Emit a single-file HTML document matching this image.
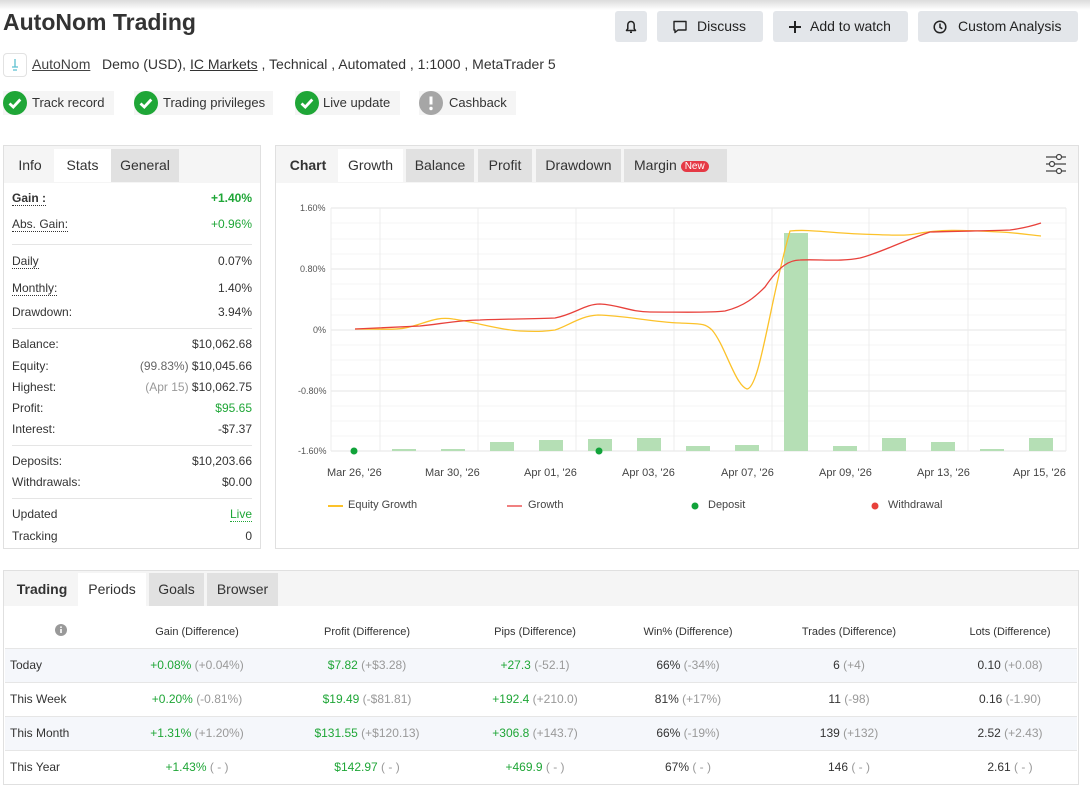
<!DOCTYPE html>
<html><head><meta charset="utf-8"><style>
*{box-sizing:border-box;margin:0;padding:0}
body{width:1090px;height:795px;background:#fff;font-family:"Liberation Sans",Arial,sans-serif;color:#333;position:relative;overflow:hidden}
.a{position:absolute;white-space:nowrap}
.topsh{position:absolute;left:0;top:0;width:1090px;height:10px;background:linear-gradient(#dcdcdc,#fff)}
.btn{position:absolute;top:11px;height:31px;background:#e3e6ea;border-radius:3px;font-size:14px;color:#222;line-height:31px}
.badge{position:absolute;top:91px;height:24px;background:#f5f5f5;font-size:13px;line-height:24px;color:#333}
.chk{position:absolute;left:0;top:0;width:24px;height:24px;border-radius:50%;background:#1fa637}
.panel{position:absolute;border:1px solid #e0e0e0;background:#fff}
.tabbar{position:absolute;left:0;top:0;right:0;height:37px;background:#f5f5f5}
.tab{position:absolute;top:4px;height:33px;line-height:33px;font-size:14px;color:#333;text-align:center}
.tw{background:#fff}.tg{background:#e1e1e1}
.row{position:absolute;left:8px;right:8px;font-size:12px;color:#333}
.row .v{position:absolute;right:0;top:0}
.dot{border-bottom:1px dotted #333}
.g{color:#1fa637}.gr{color:#999}
.sep{position:absolute;left:8px;right:8px;height:1px;background:#e5e5e5}
.tr{position:absolute;left:1px;right:1px;height:34px;border-top:1px solid #e6e6e6;font-size:12px;line-height:33px}
.tr span.c{position:absolute;top:0;transform:translateX(-50%);white-space:nowrap}
.lt{background:#f5f7fb}
.ax{font-size:9px;color:#555;position:absolute}
.xl{font-size:11px;color:#444;position:absolute}
</style></head><body>
<div class="topsh"></div>
<div class="a" style="left:3px;top:9px;font-size:23px;color:#333;font-weight:bold">AutoNom Trading</div>

<div class="btn" style="left:615px;width:32px"><svg width="32" height="31" viewBox="0 0 32 31"><path d="M11.5 19.5h9l-1.3-1.8v-4a3.2 3.2 0 0 0-6.4 0v4z M15 21.3h2" fill="none" stroke="#222" stroke-width="1.5" stroke-linejoin="round"/></svg></div>
<div class="btn" style="left:657px;width:106px"><svg class="a" style="left:15px;top:8px" width="16" height="16" viewBox="0 0 16 16"><path d="M2 2.5h12v8.5H6l-3 2.5V11H2z" fill="none" stroke="#222" stroke-width="1.4" stroke-linejoin="round"/></svg><span class="a" style="left:40px">Discuss</span></div>
<div class="btn" style="left:773px;width:135px"><svg class="a" style="left:15px;top:9px" width="14" height="14" viewBox="0 0 14 14"><path d="M7 1v12M1 7h12" stroke="#222" stroke-width="2"/></svg><span class="a" style="left:37px">Add to watch</span></div>
<div class="btn" style="left:918px;width:160px"><svg class="a" style="left:15px;top:9px" width="14" height="14" viewBox="0 0 14 14"><circle cx="7" cy="7" r="5.8" fill="none" stroke="#222" stroke-width="1.5"/><path d="M7 3.5V7.3l2.3 1.5" fill="none" stroke="#222" stroke-width="1.5"/></svg><span class="a" style="left:40px">Custom Analysis</span></div>

<div class="a" style="left:3px;top:53px;width:24px;height:24px;border:1px solid #e2e2e2;border-radius:4px;background:#fff"><svg width="22" height="22" viewBox="0 0 22 22"><path d="M11 5v8M8 13h6M9 16h4" stroke="#5bbfd0" stroke-width="1.3"/></svg></div>
<div class="a" style="left:32px;top:56px;font-size:14px;color:#333"><span style="text-decoration:underline;color:#444">AutoNom</span>&nbsp;&nbsp; Demo (USD), <span style="text-decoration:underline">IC Markets</span> , Technical , Automated , 1:1000 , MetaTrader 5</div>

<div class="badge" style="left:3px;width:111px"><div class="chk"><svg width="24" height="24"><path d="M6.5 12.5l3.8 3.5 7-7.5" fill="none" stroke="#fff" stroke-width="2.8"/></svg></div><span class="a" style="left:29px">Track record</span></div>
<div class="badge" style="left:134px;width:139px"><div class="chk"><svg width="24" height="24"><path d="M6.5 12.5l3.8 3.5 7-7.5" fill="none" stroke="#fff" stroke-width="2.8"/></svg></div><span class="a" style="left:29px">Trading privileges</span></div>
<div class="badge" style="left:295px;width:105px"><div class="chk"><svg width="24" height="24"><path d="M6.5 12.5l3.8 3.5 7-7.5" fill="none" stroke="#fff" stroke-width="2.8"/></svg></div><span class="a" style="left:28px">Live update</span></div>
<div class="badge" style="left:419px;width:97px"><div class="chk" style="background:#a6a6a6"><svg width="24" height="24"><path d="M12 5.5v8" stroke="#fff" stroke-width="3"/><circle cx="12" cy="17.5" r="1.7" fill="#fff"/></svg></div><span class="a" style="left:30px">Cashback</span></div>

<!-- left panel -->
<div class="panel" style="left:3px;top:145px;width:258px;height:404px">
 <div class="tabbar"></div>
 <div class="tab" style="left:2px;width:48px;top:3px">Info</div>
 <div class="tab tw" style="left:50px;width:57px;top:3px">Stats</div>
 <div class="tab tg" style="left:107px;width:68px;top:3px">General</div>
 <div class="row" style="top:45px"><b class="dot">Gain :</b><b class="v g">+1.40%</b></div>
 <div class="row" style="top:71px"><span class="dot">Abs. Gain:</span><span class="v g">+0.96%</span></div>
 <div class="sep" style="top:98px"></div>
 <div class="row" style="top:108px"><span class="dot">Daily</span><span class="v">0.07%</span></div>
 <div class="row" style="top:135px"><span class="dot">Monthly:</span><span class="v">1.40%</span></div>
 <div class="row" style="top:159px">Drawdown:<span class="v">3.94%</span></div>
 <div class="sep" style="top:182px"></div>
 <div class="row" style="top:191px">Balance:<span class="v">$10,062.68</span></div>
 <div class="row" style="top:213px">Equity:<span class="v"><span style="color:#666">(99.83%)</span> $10,045.66</span></div>
 <div class="row" style="top:234px">Highest:<span class="v"><span class="gr">(Apr 15)</span> $10,062.75</span></div>
 <div class="row" style="top:255px">Profit:<span class="v g">$95.65</span></div>
 <div class="row" style="top:276px">Interest:<span class="v">-$7.37</span></div>
 <div class="sep" style="top:299px"></div>
 <div class="row" style="top:308px">Deposits:<span class="v">$10,203.66</span></div>
 <div class="row" style="top:329px">Withdrawals:<span class="v">$0.00</span></div>
 <div class="sep" style="top:352px"></div>
 <div class="row" style="top:361px">Updated<span class="v g" style="border-bottom:1px dotted #1fa637">Live</span></div>
 <div class="row" style="top:383px">Tracking<span class="v">0</span></div>
</div>

<!-- chart panel -->
<div class="panel" style="left:275px;top:145px;width:804px;height:404px">
 <div class="tabbar"></div>
 <div class="tab" style="left:6px;width:52px;top:3px;font-weight:bold">Chart</div>
 <div class="tab tw" style="left:62px;width:65px;top:3px">Growth</div>
 <div class="tab tg" style="left:130px;width:68px;top:3px">Balance</div>
 <div class="tab tg" style="left:202px;width:54px;top:3px">Profit</div>
 <div class="tab tg" style="left:260px;width:85px;top:3px">Drawdown</div>
 <div class="tab tg" style="left:348px;width:103px;top:3px;text-align:left;padding-left:10px">Margin <span style="display:inline-block;background:#e53945;color:#fff;font-size:10px;line-height:11px;padding:0 4px;border-radius:6px;vertical-align:1px">New</span></div>
 <svg class="a" style="left:768px;top:7px" width="24" height="22" viewBox="0 0 24 22"><g stroke="#444" stroke-width="1.2" fill="#fff"><path d="M2 4h20M2 11h20M2 18h20"/><circle cx="15" cy="4" r="2.5"/><circle cx="8" cy="11" r="2.5"/><circle cx="15" cy="18" r="2.5"/></g></svg>
</div>
<svg class="a" style="left:0;top:0" width="1090" height="560">
 <g stroke="#ececec" stroke-width="1">
  <path d="M331 208H1066M331 269H1066M331 330H1066M331 391H1066M331 451H1066" stroke="#e4e4e4"/>
  <path d="M331 223H1066M331 239H1066M331 254H1066M331 284H1066M331 299H1066M331 315H1066M331 345H1066M331 360H1066M331 375H1066M331 406H1066M331 421H1066M331 436H1066" stroke="#f5f5f5"/>
  <path d="M331 208V451M380 208V451M478 208V451M576 208V451M674 208V451M772 208V451M869 208V451M968 208V451M1066 208V451"/>
 </g>
 <g fill="#b5dfb5">
  <rect x="392" y="449" width="24" height="2"/><rect x="441" y="449" width="24" height="2"/><rect x="490" y="442" width="24" height="9"/><rect x="539" y="440" width="24" height="11"/><rect x="588" y="439" width="24" height="12"/><rect x="637" y="438" width="24" height="13"/><rect x="686" y="446" width="24" height="5"/><rect x="735" y="445" width="24" height="6"/><rect x="784" y="233" width="24" height="218"/><rect x="833" y="446" width="24" height="5"/><rect x="882" y="438" width="24" height="13"/><rect x="931" y="442" width="24" height="9"/><rect x="980" y="449" width="24" height="2"/><rect x="1029" y="438" width="24" height="13"/>
 </g>
 <path d="M355 329C380 329 395 330 405 328C425 324 435 316 453 319C475 322 500 330 520 331C540 332 548 331 555 330C570 325 580 316 598 315C630 316 650 322 680 323C700 324 705 323 712 330C725 345 735 385 747 389C760 388 770 300 790 231C810 229 830 233 860 234C890 235 905 236 915 234C940 229 960 230 1000 232C1020 233 1030 235 1041 236" fill="none" stroke="#fcc22a" stroke-width="1.3"/>
 <path d="M355 329C380 328 400 327 420 326C440 324 460 320 480 320C500 319 530 319 555 318C575 314 585 304 600 304C620 305 630 312 650 312C680 312 710 313 725 311C745 306 755 297 765 287C780 265 790 260 800 260C820 259 840 262 860 258C880 253 900 242 930 232C960 231 990 231 1010 230C1025 228 1035 225 1041 223" fill="none" stroke="#e8413b" stroke-width="1.3"/>
 <circle cx="354" cy="451" r="3.5" fill="#11a33a"/><circle cx="599" cy="451" r="3.5" fill="#11a33a"/>
 <path d="M328 506h15" stroke="#fcc22a" stroke-width="2"/><path d="M507 506h15" stroke="#f08080" stroke-width="2"/>
 <circle cx="695" cy="506" r="3.5" fill="#11a33a"/><circle cx="875" cy="506" r="3.5" fill="#e8413b"/>
</svg>
<div class="ax" style="left:300px;top:203px">1.60%</div>
<div class="ax" style="left:300px;top:264px">0.80%</div>
<div class="ax" style="left:313px;top:325px">0%</div>
<div class="ax" style="left:298px;top:386px">-0.80%</div>
<div class="ax" style="left:298px;top:446px">-1.60%</div>
<div class="xl" style="left:327px;top:467px">Mar 26, '26</div>
<div class="xl" style="left:425px;top:467px">Mar 30, '26</div>
<div class="xl" style="left:524px;top:467px">Apr 01, '26</div>
<div class="xl" style="left:622px;top:467px">Apr 03, '26</div>
<div class="xl" style="left:721px;top:467px">Apr 07, '26</div>
<div class="xl" style="left:819px;top:467px">Apr 09, '26</div>
<div class="xl" style="left:917px;top:467px">Apr 13, '26</div>
<div class="xl" style="left:1013px;top:467px">Apr 15, '26</div>
<div class="xl" style="left:348px;top:499px">Equity Growth</div>
<div class="xl" style="left:528px;top:499px">Growth</div>
<div class="xl" style="left:708px;top:499px">Deposit</div>
<div class="xl" style="left:888px;top:499px">Withdrawal</div>

<!-- bottom -->
<div class="panel" style="left:3px;top:570px;width:1076px;height:215px">
 <div class="tabbar" style="height:35px"></div>
 <div class="tab" style="left:4px;width:68px;top:2px;font-weight:bold">Trading</div>
 <div class="tab tw" style="left:74px;width:68px;top:2px">Periods</div>
 <div class="tab tg" style="left:145px;width:55px;top:2px">Goals</div>
 <div class="tab tg" style="left:203px;width:71px;top:2px">Browser</div>
 <div class="tr" style="top:40px;height:37px;border-top:none;font-size:11px;line-height:42px;color:#333">
  <span class="c" style="left:56px"><svg width="12" height="12" style="vertical-align:-1px"><circle cx="6" cy="6" r="6" fill="#999"/><path d="M6 5v4" stroke="#fff" stroke-width="1.6"/><circle cx="6" cy="3.2" r="0.9" fill="#fff"/></svg></span>
  <span class="c" style="left:192px">Gain (Difference)</span><span class="c" style="left:362px">Profit (Difference)</span><span class="c" style="left:530px">Pips (Difference)</span><span class="c" style="left:683px">Win% (Difference)</span><span class="c" style="left:844px">Trades (Difference)</span><span class="c" style="left:1005px">Lots (Difference)</span>
 </div>
 <div class="tr lt" style="top:77px"><span class="a" style="left:5px">Today</span><span class="c" style="left:192px"><span class="g">+0.08%</span> <span class="gr">(+0.04%)</span></span><span class="c" style="left:362px"><span class="g">$7.82</span> <span class="gr">(+$3.28)</span></span><span class="c" style="left:530px"><span class="g">+27.3</span> <span class="gr">(-52.1)</span></span><span class="c" style="left:683px">66% <span class="gr">(-34%)</span></span><span class="c" style="left:844px">6 <span class="gr">(+4)</span></span><span class="c" style="left:1005px">0.10 <span class="gr">(+0.08)</span></span></div>
 <div class="tr" style="top:111px"><span class="a" style="left:5px">This Week</span><span class="c" style="left:192px"><span class="g">+0.20%</span> <span class="gr">(-0.81%)</span></span><span class="c" style="left:362px"><span class="g">$19.49</span> <span class="gr">(-$81.81)</span></span><span class="c" style="left:530px"><span class="g">+192.4</span> <span class="gr">(+210.0)</span></span><span class="c" style="left:683px">81% <span class="gr">(+17%)</span></span><span class="c" style="left:844px">11 <span class="gr">(-98)</span></span><span class="c" style="left:1005px">0.16 <span class="gr">(-1.90)</span></span></div>
 <div class="tr lt" style="top:145px"><span class="a" style="left:5px">This Month</span><span class="c" style="left:192px"><span class="g">+1.31%</span> <span class="gr">(+1.20%)</span></span><span class="c" style="left:362px"><span class="g">$131.55</span> <span class="gr">(+$120.13)</span></span><span class="c" style="left:530px"><span class="g">+306.8</span> <span class="gr">(+143.7)</span></span><span class="c" style="left:683px">66% <span class="gr">(-19%)</span></span><span class="c" style="left:844px">139 <span class="gr">(+132)</span></span><span class="c" style="left:1005px">2.52 <span class="gr">(+2.43)</span></span></div>
 <div class="tr" style="top:179px"><span class="a" style="left:5px">This Year</span><span class="c" style="left:192px"><span class="g">+1.43%</span> <span class="gr">( - )</span></span><span class="c" style="left:362px"><span class="g">$142.97</span> <span class="gr">( - )</span></span><span class="c" style="left:530px"><span class="g">+469.9</span> <span class="gr">( - )</span></span><span class="c" style="left:683px">67% <span class="gr">( - )</span></span><span class="c" style="left:844px">146 <span class="gr">( - )</span></span><span class="c" style="left:1005px">2.61 <span class="gr">( - )</span></span></div>
</div>
</body></html>
